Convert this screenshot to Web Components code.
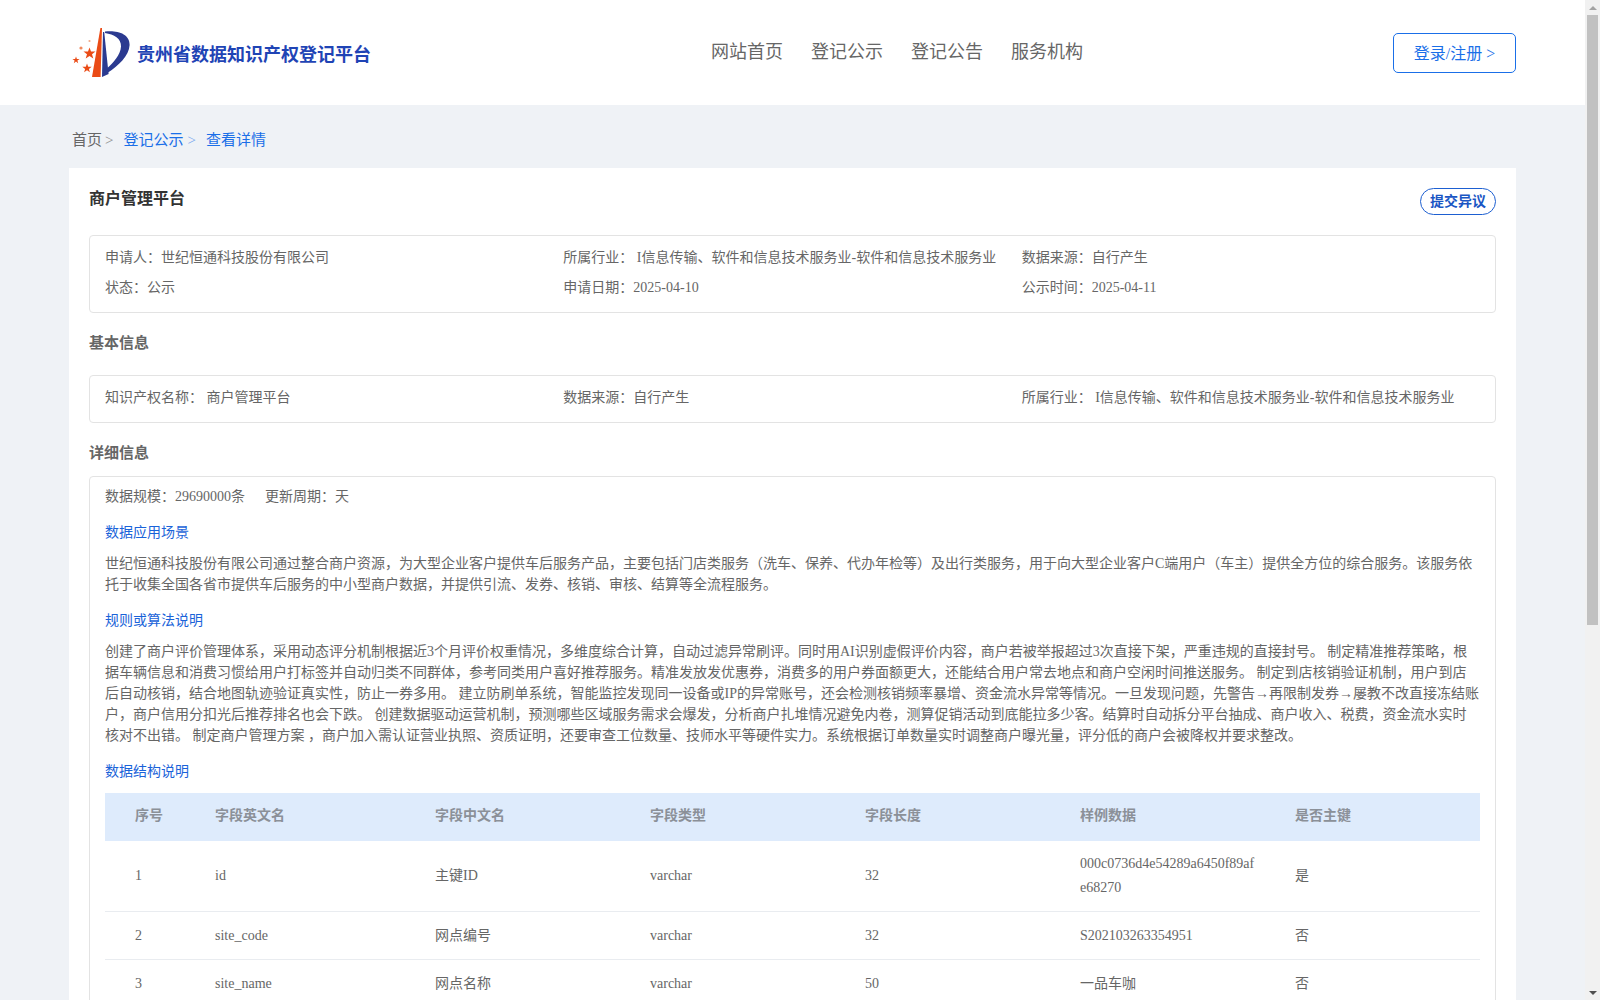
<!DOCTYPE html>
<html lang="zh-CN"><head><meta charset="utf-8"><title>商户管理平台</title>
<style>
html,body{margin:0;height:100%;overflow:hidden;background:#eff2f6}
body{font-family:"Liberation Serif","Noto Sans CJK SC",serif;font-size:14px;color:#666}
</style></head><body>
<app-shell>
<site-header></site-header>
<bread-crumb></bread-crumb>
<main-card>
  <title-row slot="top"></title-row>
  <info-box rows="2">
    <info-item>申请人：世纪恒通科技股份有限公司</info-item>
    <info-item>所属行业： I信息传输、软件和信息技术服务业-软件和信息技术服务业</info-item>
    <info-item>数据来源：自行产生</info-item>
    <info-item>状态：公示</info-item>
    <info-item>申请日期：2025-04-10</info-item>
    <info-item>公示时间：2025-04-11</info-item>
  </info-box>
  <sec-head>基本信息</sec-head>
  <info-box rows="1">
    <info-item>知识产权名称： 商户管理平台</info-item>
    <info-item>数据来源：自行产生</info-item>
    <info-item>所属行业： I信息传输、软件和信息技术服务业-软件和信息技术服务业</info-item>
  </info-box>
  <sec-head detail>详细信息</sec-head>
  <detail-box>
    <detail-meta><span>数据规模：29690000条</span><span>更新周期：天</span></detail-meta>
    <sub-head>数据应用场景</sub-head>
    <detail-text>世纪恒通科技股份有限公司通过整合商户资源，为大型企业客户提供车后服务产品，主要包括门店类服务（洗车、保养、代办年检等）及出行类服务，用于向大型企业客户C端用户（车主）提供全方位的综合服务。该服务依托于收集全国各省市提供车后服务的中小型商户数据，并提供引流、发券、核销、审核、结算等全流程服务。</detail-text>
    <sub-head>规则或算法说明</sub-head>
    <detail-text>创建了商户评价管理体系，采用动态评分机制根据近3个月评价权重情况，多维度综合计算，自动过滤异常刷评。同时用AI识别虚假评价内容，商户若被举报超过3次直接下架，严重违规的直接封号。 制定精准推荐策略，根据车辆信息和消费习惯给用户打标签并自动归类不同群体，参考同类用户喜好推荐服务。精准发放发优惠券，消费多的用户券面额更大，还能结合用户常去地点和商户空闲时间推送服务。 制定到店核销验证机制，用户到店后自动核销，结合地图轨迹验证真实性，防止一券多用。 建立防刷单系统，智能监控发现同一设备或IP的异常账号，还会检测核销频率暴增、资金流水异常等情况。一旦发现问题，先警告→再限制发券→屡教不改直接冻结账户，商户信用分扣光后推荐排名也会下跌。 创建数据驱动运营机制，预测哪些区域服务需求会爆发，分析商户扎堆情况避免内卷，测算促销活动到底能拉多少客。结算时自动拆分平台抽成、商户收入、税费，资金流水实时核对不出错。 制定商户管理方案 ，商户加入需认证营业执照、资质证明，还要审查工位数量、技师水平等硬件实力。系统根据订单数量实时调整商户曝光量，评分低的商户会被降权并要求整改。</detail-text>
    <sub-head table>数据结构说明</sub-head>
    <field-table>
      <field-row head><span>序号</span><span>字段英文名</span><span>字段中文名</span><span>字段类型</span><span>字段长度</span><span>样例数据</span><span>是否主键</span></field-row>
      <field-row><span>1</span><span>id</span><span>主键ID</span><span>varchar</span><span>32</span><span>000c0736d4e54289a6450f89afe68270</span><span>是</span></field-row>
      <field-row><span>2</span><span>site_code</span><span>网点编号</span><span>varchar</span><span>32</span><span>S202103263354951</span><span>否</span></field-row>
      <field-row><span>3</span><span>site_name</span><span>网点名称</span><span>varchar</span><span>50</span><span>一品车咖</span><span>否</span></field-row>
    </field-table>
  </detail-box>
</main-card>
</app-shell>
<script>
function def(name, css, html){
  customElements.define(name, class extends HTMLElement{
    constructor(){super();const r=this.attachShadow({mode:'open'});r.innerHTML='<style>'+css+'</style>'+(html||'<slot></slot>');}
  });
}
def('app-shell',`
  :host{display:flex;height:100vh;overflow:hidden}
  .page{flex:1;min-width:0;overflow:hidden}
  .bar{flex:none;width:15px;background:#f1f1f1;display:flex;flex-direction:column;align-items:center}
  .btn{flex:none;height:15px;display:flex;align-items:center;justify-content:center}
  .thumb{flex:none;width:11px;height:610px;background:#c1c1c1}
  .rest{flex:1}
`,`<div class="page"><slot></slot></div>
<div class="bar" aria-hidden="true">
  <div class="btn"><svg width="8" height="4" viewBox="0 0 8 4"><path d="M4 0L8 4H0z" fill="#a3a3a3"/></svg></div>
  <div class="thumb"></div><div class="rest"></div>
  <div class="btn"><svg width="8" height="4" viewBox="0 0 8 4"><path d="M0 0H8L4 4z" fill="#505050"/></svg></div>
</div>`);
def('site-header',`
  :host{display:flex;align-items:center;height:105px;background:#fff;padding:0 69px 0 70px}
  .left{flex:none;width:641px;display:flex;align-items:center}
  svg{flex:none;display:block}
  .brand{margin-left:7px;font-size:18px;font-weight:700;color:#1f44b5;line-height:24px;position:relative;top:2px}
  nav{flex:1;display:flex;gap:28px;font-size:18px;color:#666;line-height:24px;position:relative;top:-1px}
  a{color:inherit;text-decoration:none}
  .login{flex:none;box-sizing:border-box;width:123px;height:40px;padding-bottom:2px;border:1px solid #1a6fe8;border-radius:5px;display:flex;align-items:center;justify-content:center;font-size:16px;color:#1a6fe8;margin-top:1px}
`,`<div class="left">
  <svg width="60" height="50" viewBox="70 28 60 50" aria-label="logo">
    <path d="M100.4 28L102 28L100.6 77L92 77Z" fill="#ea4b16"/>
    <path d="M103 32L104.2 32L108.6 74L102 77Z" fill="#2b3a90"/>
    <path d="M105 31.5C116 30 130 33 129.6 45C129.2 56 118 66 108 72.5L107.4 68C113 63 120.5 55 121 46.5C121.4 38.5 114 34.5 105 33Z" fill="#2b3a90"/>
    <path d="M89.5 47.5L91 51.5L95.5 51.5L92 54.2L93.3 58.5L89.5 56L85.7 58.5L87 54.2L83.5 51.5L88 51.5Z" fill="#ea4b16"/>
    <path d="M76 56.5L76.9 59L79.6 59L77.4 60.6L78.2 63.2L76 61.6L73.8 63.2L74.6 60.6L72.4 59L75.1 59Z" fill="#ea4b16"/>
    <path d="M87 63.5L88.2 66.7L91.7 66.7L88.9 68.9L89.9 72.3L87 70.3L84.1 72.3L85.1 68.9L82.3 66.7L85.8 66.7Z" fill="#ea4b16"/>
    <circle cx="81" cy="48" r="1.6" fill="#f08a60"/><circle cx="89.5" cy="41" r="1.1" fill="#f2a888"/>
  </svg>
  <div class="brand">贵州省数据知识产权登记平台</div>
</div>
<nav><a href="#">网站首页</a><a href="#">登记公示</a><a href="#">登记公告</a><a href="#">服务机构</a></nav>
<a class="login" href="#">登录/注册 &gt;</a>`);
def('bread-crumb',`
  :host{display:flex;height:63px;align-items:center;padding:7px 0 0 72px;font-size:15px;color:#666;line-height:24px;box-sizing:border-box}
  a{color:#1a6fe8;text-decoration:none}
  .g{display:inline-block;margin-left:3px;color:#8d8d8d}
  .b{display:inline-block;margin-left:4px;color:#7aa8ef}
  .s{display:inline-block;width:10px}
`,`<span>首页</span><span class="g">&gt;</span><span class="s"></span><a href="#">登记公示</a><span class="b">&gt;</span><span class="s"></span><a href="#">查看详情</a>`);
def('main-card',`
  :host{display:block;margin:0 69px;background:#fff;padding:20px 20px 0}
`,`<slot name="top"></slot><slot></slot>`);
def('title-row',`
  :host{display:flex;justify-content:space-between;align-items:flex-start;height:27px;margin-bottom:20px}
  h1{margin:0;font-size:16px;line-height:22px;font-weight:700;color:#333}
  button{all:unset;box-sizing:border-box;width:76px;height:27px;border:1px solid #1d5fd1;border-radius:13.5px;text-align:center;font-size:14px;line-height:25px;font-weight:700;color:#1a56c4;font-family:inherit}
`,`<h1>商户管理平台</h1><button>提交异议</button>`);
def('info-box',`
  :host{display:grid;grid-template-columns:repeat(3,1fr);box-sizing:border-box;border:1px solid #e3e3e3;border-radius:4px;padding:7px 15px 9px;line-height:30px}
  :host([rows="1"]){padding:7px 15px 9px;height:48px}
`);
def('info-item',`:host{display:block;white-space:nowrap;color:#666}`);
def('sec-head',`
  :host{display:block;font-size:15px;line-height:22px;font-weight:700;color:#666;margin:19px 0 21px}
  :host([detail]){margin:19px 0 12px}
`);
def('detail-box',`
  :host{display:block;border:1px solid #e3e3e3;border-radius:4px;padding:8px 15px 0}
`);
def('detail-meta',`
  :host{display:flex;gap:20px;line-height:24px;color:#666}
`);
def('sub-head',`
  :host{display:block;line-height:24px;color:#1a63d9;margin:12px 0 8px}
  :host([table]){margin:13px 0 9px}
`);
def('detail-text',`
  :host{display:block;line-height:21px;color:#666;margin-bottom:14px}
`);
def('field-table',`:host{display:block}`);
def('field-row',`
  :host{display:grid;grid-template-columns:80px 220px 215px 215px 215px 215px 215px;align-items:center;min-height:47px;border-bottom:1px solid #e9ecf0;color:#666}
  :host([head]){background:#deebfc;border-bottom:0;min-height:48px;font-weight:700;color:#8b9098;padding-bottom:2px;box-sizing:border-box;height:48px}
  ::slotted(span){padding:11px 6px 11px 30px;line-height:24px;word-break:break-all;box-sizing:border-box;min-width:0}
`);
</script>
</body></html>
